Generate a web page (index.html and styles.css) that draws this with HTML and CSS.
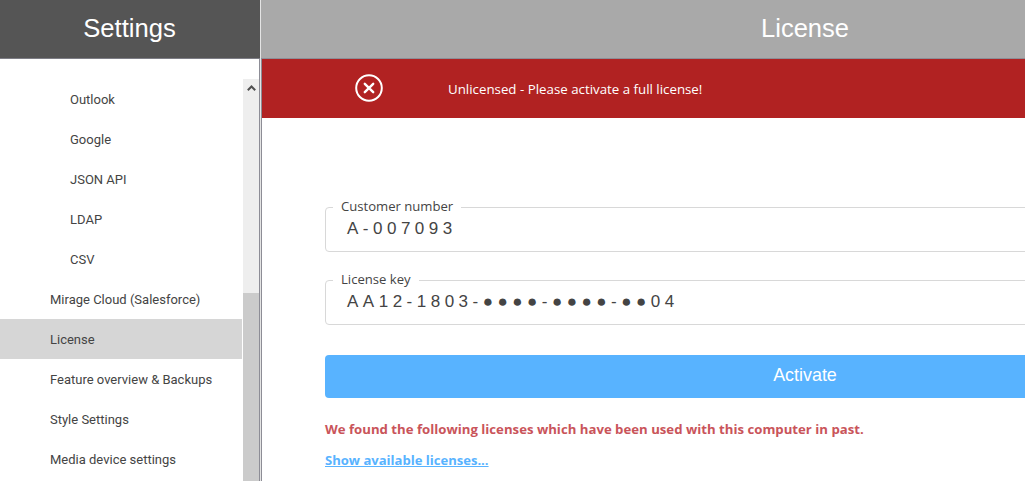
FILE: index.html
```html
<!DOCTYPE html>
<html lang="en">
<head>
<meta charset="utf-8">
<title>License</title>
<link rel="stylesheet" href="styles.css">
</head>
<body>
<div class="app">
  <aside class="sidebar">
    <header class="side-head">Settings</header>
    <div class="side-body">
      <nav class="menu">
        <a class="item sub">Outlook</a>
        <a class="item sub">Google</a>
        <a class="item sub">JSON API</a>
        <a class="item sub">LDAP</a>
        <a class="item sub">CSV</a>
        <a class="item">Mirage Cloud (Salesforce)</a>
        <a class="item active">License</a>
        <a class="item">Feature overview &amp; Backups</a>
        <a class="item">Style Settings</a>
        <a class="item">Media device settings</a>
      </nav>
      <div class="scrollbar">
        <div class="track">
          <svg class="arrow" width="9" height="6" viewBox="0 0 9 6"><path d="M0.8 5.2 L4.5 1.5 L8.2 5.2" fill="none" stroke="#505050" stroke-width="2"/></svg>
        </div>
        <div class="thumb"></div>
      </div>
    </div>
  </aside>
  <main class="main">
    <header class="main-head">License</header>
    <div class="main-body">
      <div class="alert">
        <svg class="alert-icon" width="28" height="28" viewBox="0 0 28 28"><circle cx="14" cy="14" r="12.8" fill="none" stroke="#fff" stroke-width="2"/><path d="M9.8 9.8 L18.2 18.2 M18.2 9.8 L9.8 18.2" fill="none" stroke="#fff" stroke-width="2.4" stroke-linecap="round"/></svg>
        <span class="alert-text">Unlicensed - Please activate a full license!</span>
      </div>
      <div class="content">
        <fieldset class="field">
          <legend>Customer number</legend>
          <div class="value">A-007093</div>
        </fieldset>
        <fieldset class="field">
          <legend>License key</legend>
          <div class="value">AA12-1803-●●●●-●●●●-●●04</div>
        </fieldset>
        <button class="activate" type="button">Activate</button>
        <p class="found">We found the following licenses which have been used with this computer in past.</p>
        <a class="show">Show available licenses...</a>
      </div>
    </div>
  </main>
</div>
</body>
</html>
```
FILE: styles.css
```css
html, body {
  margin: 0;
  height: 100%;
  overflow: hidden;
  background: #fff;
}
.app {
  display: flex;
  gap: 1px;
  width: 1349px;
  height: 481px;
  font-family: "Open Sans", sans-serif;
  color: #444;
  background: #e4e4e4;
}
.sidebar {
  width: 260px;
  flex: none;
  display: flex;
  flex-direction: column;
  background: #fff;
}
.side-head {
  height: 58px;
  padding-right: 1px;
  border-bottom: 1px solid #7d7d85;
  background: #555;
  color: #fff;
  font: 25.6px/57px "Liberation Sans", sans-serif;
  text-align: center;
}
.side-body {
  flex: 1;
  display: flex;
  min-height: 0;
  padding-top: 20px;
  border-right: 1px solid #8d8d96;
}
.menu {
  width: 242px;
  flex: none;
  display: flex;
  flex-direction: column;
}
.item {
  flex: none;
  height: 40px;
  line-height: 42px;
  padding-left: 50px;
  font-family: Roboto, sans-serif;
  font-size: 13px;
  color: #444;
}
.sub { padding-left: 70px; }
.active { background: #d6d6d6; }
.scrollbar {
  width: 16px;
  margin-left: 1px;
  display: flex;
  flex-direction: column;
}
.track {
  height: 214px;
  background: #eee;
  display: flex;
  justify-content: center;
  align-items: flex-start;
  padding-top: 6px;
  box-sizing: border-box;
}
.thumb {
  flex: 1;
  background: #cbcbcb;
}
.main {
  flex: 1;
  display: flex;
  flex-direction: column;
  min-width: 0;
  background: #fff;
}
.main-head {
  height: 58px;
  border-bottom: 1px solid #8d8d96;
  background: #a9a9a9;
  color: #fff;
  font: 25.5px/57px "Liberation Sans", sans-serif;
  text-align: center;
}
.main-body {
  flex: 1;
  min-height: 0;
  border-left: 1px solid #8d8d96;
}
.alert {
  height: 59px;
  background: #b12222;
  display: flex;
  align-items: center;
  color: #fff;
}
.alert-icon {
  margin-left: 93px;
  margin-bottom: 2px;
  flex: none;
}
.alert-text {
  margin-left: 65px;
  font-size: 13.3px;
}
.content {
  padding: 79px 64px 0 63px;
}
.field {
  margin: 0 0 18px;
  padding: 0 21px;
  height: 55px;
  box-sizing: border-box;
  border: 1px solid #d8d8d8;
  border-radius: 4px;
}
.field legend {
  padding: 0 8px 2px;
  margin-left: -14px;
  font-size: 13.1px;
  line-height: 18px;
  color: #444;
}
.value {
  font: 17px/19px "Liberation Sans", sans-serif;
  letter-spacing: 4.5px;
  color: #444;
  margin-top: 2px;
}
.activate {
  display: block;
  width: 100%;
  height: 43px;
  margin-top: 30px;
  border: 0;
  border-radius: 4px;
  background: #58b3ff;
  color: #fff;
  font: 17.9px "Liberation Sans", sans-serif;
  padding: 0 0 2px;
}
.found {
  margin: 22px 0 0;
  font-size: 13.2px;
  font-weight: 700;
  line-height: 18px;
  color: #c9545a;
}
.show {
  display: inline-block;
  margin-top: 13px;
  font-size: 13.05px;
  font-weight: 700;
  line-height: 18px;
  color: #58b3ff;
  text-decoration: underline;
}
```
